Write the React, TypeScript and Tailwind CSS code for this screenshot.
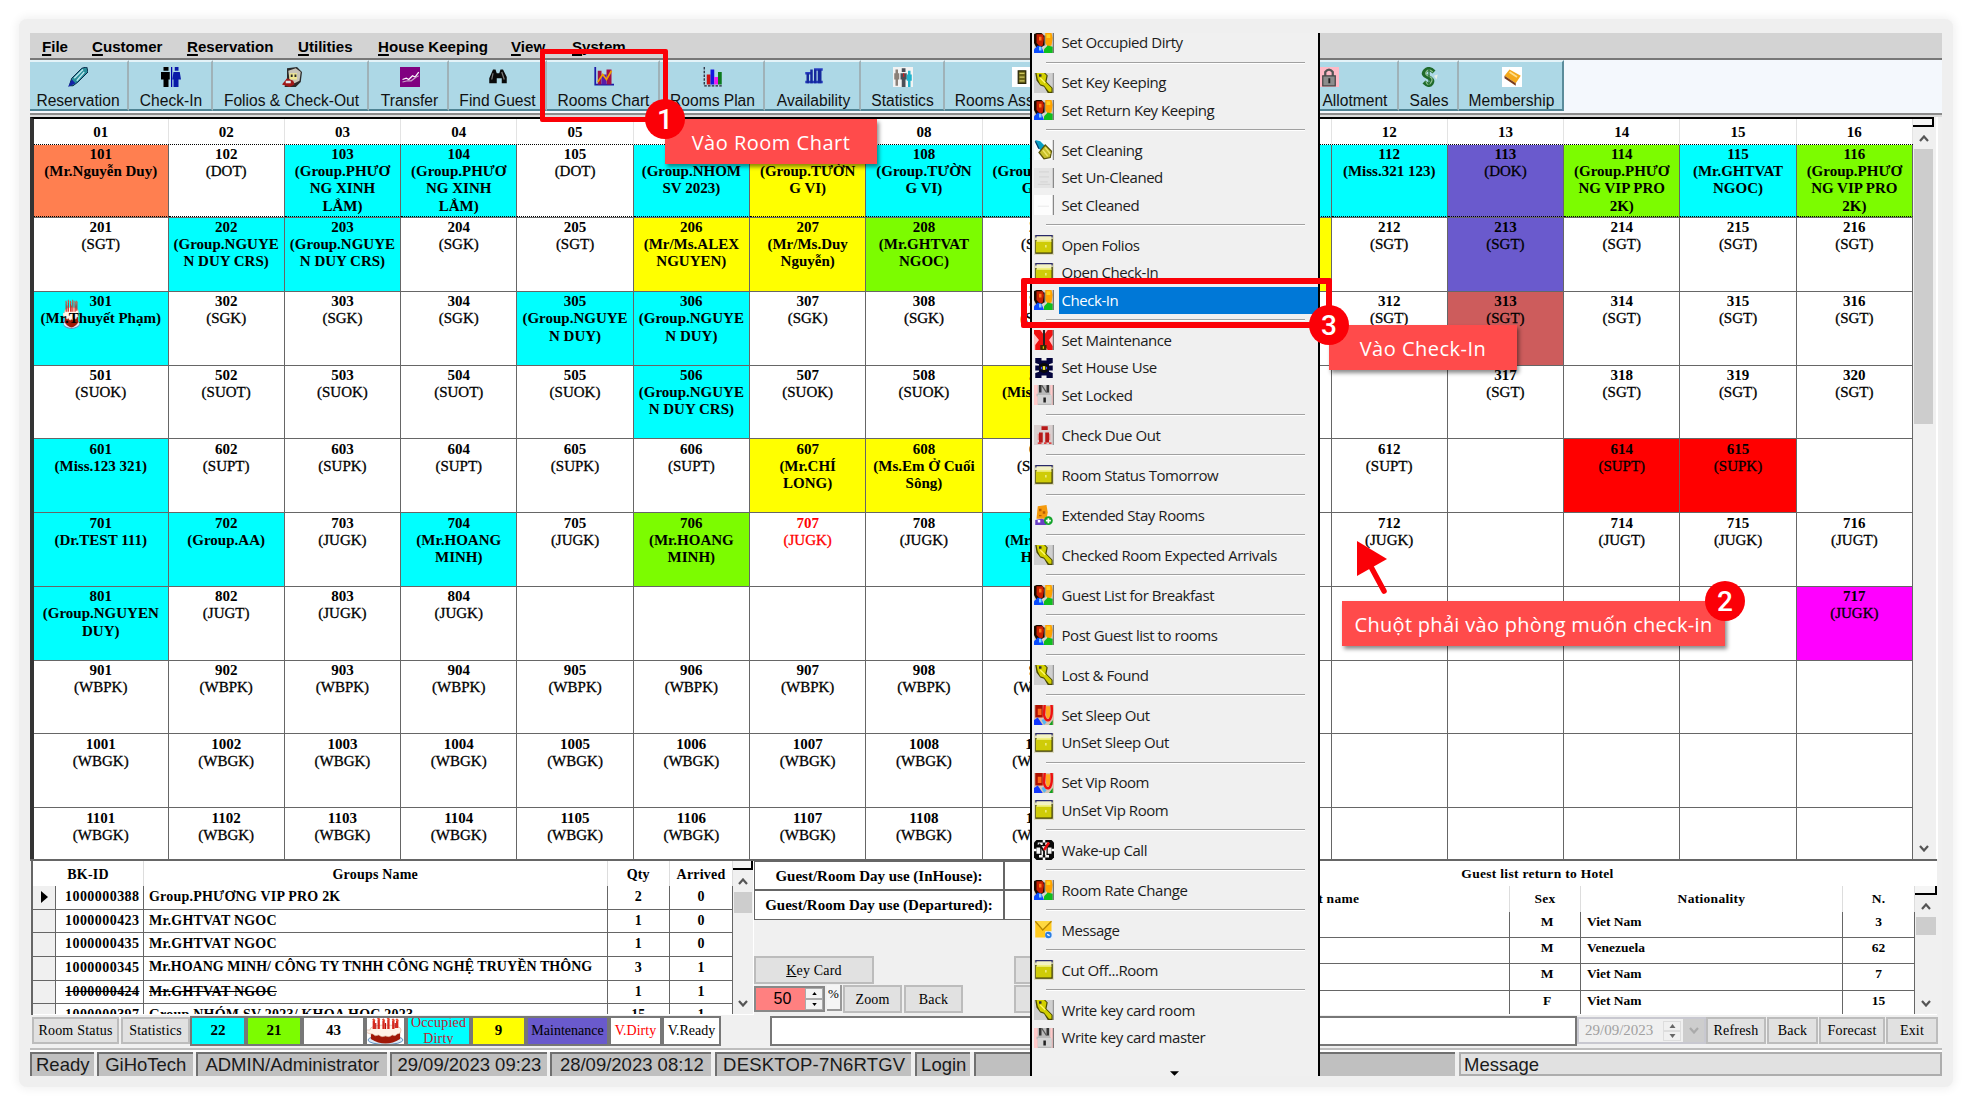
import React from "react";

type Tone = "w" | "c" | "y" | "g" | "o" | "p" | "i" | "r" | "m" | "t";

const toneClass: Record<Tone, string> = {
  w: "bg-white",
  c: "bg-[#00ffff]",
  y: "bg-[#ffff00]",
  g: "bg-[#7cfc00]",
  o: "bg-[#ff7f50]",
  p: "bg-[#6a5acd]",
  i: "bg-[#cd5c5c]",
  r: "bg-[#ff0000]",
  m: "bg-[#ff00ff]",
  t: "bg-white text-[#ff0000]",
};

/* room number | tone | guest name or room type (lines separated by "/n") */
const rooms: string[][] = [
  ["101|o|(Mr.Nguyễn Duy)", "102|w|(DOT)", "103|c|(Group.PHƯƠ/nNG XINH/nLẮM)", "104|c|(Group.PHƯƠ/nNG XINH/nLẮM)", "105|w|(DOT)", "106|c|(Group.NHOM/nSV 2023)", "107|y|(Group.TƯỜN/nG VI)", "108|c|(Group.TƯỜN/nG VI)", "109|c|(Group.TƯỜN/nG VI)", "|c|", "|c|", "112|c|(Miss.321 123)", "113|p|(DOK)", "114|g|(Group.PHƯƠ/nNG VIP PRO/n2K)", "115|c|(Mr.GHTVAT/nNGOC)", "116|g|(Group.PHƯƠ/nNG VIP PRO/n2K)"],
  ["201|w|(SGT)", "202|c|(Group.NGUYE/nN DUY CRS)", "203|c|(Group.NGUYE/nN DUY CRS)", "204|w|(SGK)", "205|w|(SGT)", "206|y|(Mr/Ms.ALEX/nNGUYEN)", "207|y|(Mr/Ms.Duy/nNguyễn)", "208|g|(Mr.GHTVAT/nNGOC)", "209|w|(SGT)", "", "|y|", "212|w|(SGT)", "213|p|(SGT)", "214|w|(SGT)", "215|w|(SGT)", "216|w|(SGT)"],
  ["301|c|(Mr.Thuyết Phạm)", "302|w|(SGK)", "303|w|(SGK)", "304|w|(SGK)", "305|c|(Group.NGUYE/nN DUY)", "306|c|(Group.NGUYE/nN DUY)", "307|w|(SGK)", "308|w|(SGK)", "309|w|(SGK)", "", "", "312|w|(SGT)", "313|i|(SGT)", "314|w|(SGT)", "315|w|(SGT)", "316|w|(SGT)"],
  ["501|w|(SUOK)", "502|w|(SUOT)", "503|w|(SUOK)", "504|w|(SUOT)", "505|w|(SUOK)", "506|c|(Group.NGUYE/nN DUY CRS)", "507|w|(SUOK)", "508|w|(SUOK)", "509|y|(Miss.ANN)", "", "", "", "317|w|(SGT)", "318|w|(SGT)", "319|w|(SGT)", "320|w|(SGT)"],
  ["601|c|(Miss.123 321)", "602|w|(SUPT)", "603|w|(SUPK)", "604|w|(SUPT)", "605|w|(SUPK)", "606|w|(SUPT)", "607|y|(Mr.CHÍ/nLONG)", "608|y|(Ms.Em Ở Cuối/nSông)", "609|w|(SUPT)", "", "", "612|w|(SUPT)", "", "614|r|(SUPT)", "615|r|(SUPK)", ""],
  ["701|c|(Dr.TEST 111)", "702|c|(Group.AA)", "703|w|(JUGK)", "704|c|(Mr.HOANG/nMINH)", "705|w|(JUGK)", "706|g|(Mr.HOANG/nMINH)", "707|t|(JUGK)", "708|w|(JUGK)", "709|c|(Mr.MINH/nHOA)", "", "", "712|w|(JUGK)", "", "714|w|(JUGT)", "715|w|(JUGK)", "716|w|(JUGT)"],
  ["801|c|(Group.NGUYEN/nDUY)", "802|w|(JUGT)", "803|w|(JUGK)", "804|w|(JUGK)", "", "", "", "", "", "", "", "", "", "", "", "717|m|(JUGK)"],
  ["901|w|(WBPK)", "902|w|(WBPK)", "903|w|(WBPK)", "904|w|(WBPK)", "905|w|(WBPK)", "906|w|(WBPK)", "907|w|(WBPK)", "908|w|(WBPK)", "909|w|(WBPK)", "", "", "", "", "", "", ""],
  ["1001|w|(WBGK)", "1002|w|(WBGK)", "1003|w|(WBGK)", "1004|w|(WBGK)", "1005|w|(WBGK)", "1006|w|(WBGK)", "1007|w|(WBGK)", "1008|w|(WBGK)", "1009|w|(WBGK)", "", "", "", "", "", "", ""],
  ["1101|w|(WBGK)", "1102|w|(WBGK)", "1103|w|(WBGK)", "1104|w|(WBGK)", "1105|w|(WBGK)", "1106|w|(WBGK)", "1107|w|(WBGK)", "1108|w|(WBGK)", "1109|w|(WBGK)", "", "", "", "", "", "", ""],
];

/* ---------- icons ---------- */

function Svg({ children, cls = "size-5" }: { children: React.ReactNode; cls?: string }) {
  return (
    <svg viewBox="0 0 16 16" className={`${cls} block shrink-0`} aria-hidden="true">
      {children}
    </svg>
  );
}

function Icon({ name }: { name: string }) {
  switch (name) {
    case "people":
      return (
        <Svg>
          <rect width="16" height="16" fill="#d8d4cc" />
          <path d="M0 1 2 0h4l2 2v8l-3 2H2L0 8z" fill="#1a0a00" />
          <path d="M2 1h5l1 3-1 6-2 1-3-3z" fill="#c81e00" />
          <path d="M4 3h2v3H4z" fill="#ff7a1a" />
          <path d="M9 0h5l1 4-1 6-3 1-2-3z" fill="#ffa200" />
          <path d="M10 1h3v3h-3z" fill="#ffd21e" />
          <path d="M8 2h1v8H8z" fill="#555" />
          <path d="M0 16v-3l3-3 3 1 2 5z" fill="#0a4dff" />
          <path d="M8 16v-3l3-3 4 1v5z" fill="#0fbf1e" />
          <path d="M4 11h2v3H4z" fill="#7fd4ff" />
          <path d="M15 0h1v16h-1z" fill="#777" />
        </Svg>
      );
    case "key":
      return (
        <Svg>
          <rect width="16" height="16" fill="#cfcfcf" />
          <path d="M1 0h8l2 2-1 5 5 5v4h-4l-3-5-3-1-3-4z" fill="#4a4a00" />
          <path d="M2 0h6l2 2-1 5 5 5v3h-2l-4-5-3-1-2-4z" fill="#d2cf00" />
          <path d="M4 1h2v2H4z" fill="#333" />
          <path d="M5 4l4 4" stroke="#fff86a" />
          <path d="M15 0h1v16h-1z" fill="#999" />
        </Svg>
      );
    case "brush":
      return (
        <Svg>
          <rect width="16" height="16" fill="#fafafa" />
          <path d="M1 0l4 1 4 4-3 4-3-3z" fill="#0a9fc4" />
          <path d="M1 1l3 6" stroke="#053a66" />
          <path d="M9 4l5 5-1 5-5 1-4-5z" fill="#c9c12a" stroke="#5c560a" />
          <path d="M7 8l4 5M9 6l4 5" stroke="#efe66a" />
          <path d="M15 0h1v16h-1z" fill="#888" />
        </Svg>
      );
    case "doc":
      return (
        <Svg>
          <rect width="16" height="16" fill="#e4e4e4" />
          <path d="M4 3h8M4 7h8M5 11h6M3 13h10" stroke="#d6d6d6" />
          <path d="M15 0h1v16h-1z" fill="#888" />
        </Svg>
      );
    case "blank":
      return (
        <Svg>
          <rect width="16" height="16" fill="#fdfdfd" />
          <path d="M3 9h9" stroke="#ededed" />
          <path d="M15 0h1v16h-1z" fill="#888" />
        </Svg>
      );
    case "folder":
      return (
        <Svg>
          <rect width="16" height="16" fill="#dedcc0" />
          <path d="M1 0h14v2H1z" fill="#2a2a6a" />
          <path d="M2 1h12v3H2z" fill="#f3f2c4" />
          <path d="M0 4l1 0v11h14V3h-1v1z" fill="#3c3a00" />
          <path d="M1.500 5h12.500v9H1.500z" fill="#cfcc08" />
          <path d="M2 4h12v1.500H2z" fill="#f2f080" />
          <path d="M9 8h1v2H9z" fill="#f7f5a0" />
        </Svg>
      );
    case "wrench":
      return (
        <Svg>
          <rect width="16" height="16" fill="#ffc4c4" />
          <path d="M0 0h5l3 4 3-4h4v4l-3 4 3 5v3h-4l-3-4-3 4H1v-4l3-4-4-5z" fill="#f01010" />
          <path d="M8 0v12" stroke="#222" strokeWidth="1.6" />
          <path d="M5 12h5v4H5z" fill="#3a2a00" />
          <path d="M7 13h1v2H7z" fill="#d2cf00" />
          <path d="M15 0h1v16h-1z" fill="#777" />
        </Svg>
      );
    case "gear":
      return (
        <Svg>
          <path d="M1 0h5v2h4V0h5v4l-3 1v1h3v4h-3v1l3 1v4h-5v-2H6v2H1v-4l3-1v-1H1V6h3V5L1 4z" fill="#04043c" />
          <circle cx="8" cy="8" r="4" fill="#0a0a0a" />
          <path d="M5.500 7h1v2h-1zM9.500 7h1v2h-1z" fill="#3b48ff" />
          <path d="M7 6.500h2v3H7z" fill="#f3ef3a" />
        </Svg>
      );
    case "lock":
      return (
        <Svg>
          <rect width="16" height="16" fill="#ffcaca" />
          <path d="M3 0h10v7l1 2v7H3V9H2V7h1z" fill="#b9b9b9" />
          <path d="M4 0h2v6H4zM10 0h2v6h-2z" fill="#333" />
          <path d="M6 0l4 6" stroke="#555" />
          <path d="M3 8h11v7H3z" fill="#d4d4d4" />
          <path d="M7.500 10h2v4h-2z" fill="#222" />
          <path d="M15 0h1v16h-1z" fill="#777" />
        </Svg>
      );
    case "due":
      return (
        <Svg>
          <rect width="16" height="16" fill="#d9cfcf" />
          <path d="M6 1h5v3H6zM4 6h3v8H4zM9 6h3v8H9z" fill="#b81818" />
          <path d="M3 14h3v1H3zM8 14h2v1H8zM12 14h2v1h-2z" fill="#e01010" />
          <path d="M3 7h1v5H3zM12 7h1v5h-1z" fill="#e58a8a" />
          <path d="M15 0h1v16h-1z" fill="#999" />
        </Svg>
      );
    case "extend":
      return (
        <Svg>
          <path d="M3 1l7-1 1 6-1 5H2z" fill="#f59a0c" />
          <path d="M4 3h2v2H4zM7 5h2v2H7zM4 8h2v1H4z" fill="#b65b00" />
          <path d="M1 12l5-1 4 1v4H1z" fill="#6a3fc4" />
          <path d="M3 12h2v2H3z" fill="#fff" />
          <circle cx="11.500" cy="12.500" r="3.500" fill="#13a32a" />
          <path d="M11.500 10.500v4M9.500 12.500h4" stroke="#fff" strokeWidth="1.400" />
        </Svg>
      );
    case "sleep":
      return (
        <Svg>
          <rect width="16" height="16" fill="#d8c4b4" />
          <path d="M1 0h6v10H1z" fill="#b01000" />
          <path d="M3 3h3v5H3z" fill="#ff6a1a" />
          <path d="M9 1h4v9l-3 1z" fill="#ffa81e" />
          <path d="M0 16v-4l3-2 4 6z" fill="#1237ff" />
          <path d="M6 12l2-1 2 3-2 2z" fill="#59b7f0" />
          <path d="M12 16l3-4v4z" fill="#12a01e" />
          <path d="M8.500 0l-.5 8q1 5 4 4 3-2 2-12" fill="none" stroke="#ee1010" strokeWidth="2" />
        </Svg>
      );
    case "clock":
      return (
        <Svg>
          <path d="M2 0h12l2 2v12l-2 2H2l-2-2V2z" fill="#0a0a0a" />
          <path d="M3 2h4v2H3zM9 2h3v2H9zM2 6h3v5H2zM11 6h3v5h-3zM4 12h3v2H4zM9 12h3v2H9zM6 5h4v7H6z" fill="#f4f4f4" />
          <path d="M7 0h2v2H7zM7 14h2v2H7zM0 7h2v2H0zM14 7h2v2h-2z" fill="#fff" />
          <path d="M4 3l4 6v4" stroke="#111" strokeWidth="1.500" fill="none" />
          <path d="M8 8l4-6" stroke="#e80c0c" strokeWidth="2" />
        </Svg>
      );
    case "mail":
      return (
        <Svg>
          <path d="M1 1h13v13H1z" fill="#ffc91e" />
          <path d="M1 1l6 7 7-7" fill="#ffd840" stroke="#b78600" />
          <path d="M9 9h6v6H9z" fill="#e4efff" />
          <circle cx="11.500" cy="12" r="2.600" fill="#2b7de0" />
          <path d="M10.500 11.500l2 1" stroke="#fff" />
        </Svg>
      );
    /* toolbar */
    case "pen":
      return (
        <Svg>
          <path d="M1 15l2-6 8-8 4-1 1 4-8 8-4 3z" fill="#2a8f9a" stroke="#0a2a4a" strokeWidth="0.800" />
          <path d="M5 9l7-7M7 11l6-7" stroke="#bfeaf0" />
          <path d="M0 16l3-6 3 3z" fill="#1522a8" />
        </Svg>
      );
    case "restroom":
      return (
        <Svg>
          <path d="M2 0h4v3H2zM0 4h7v6H6v6H2v-6H0z" fill="#000" />
          <path d="M8 0h1v16H8z" fill="#00a" />
          <path d="M11 0h3v3h-3zM10 4h5l1 6h-2v6h-4v-6H9z" fill="#0a1aa8" />
        </Svg>
      );
    case "face":
      return (
        <Svg>
          <path d="M4 1l8-1 4 4-1 8-4 4H2l2-5z" fill="#2a2a2a" />
          <path d="M5 3l6-2 4 3-1 7-4 2-4-3z" fill="#c8c4b8" />
          <path d="M6 5h6v5H6z" fill="#f0e890" />
          <path d="M7 6h1.500v2H7zM10 6h1.500v2H10z" fill="#2a2a2a" />
          <path d="M0 14l4-5 5 2 1 3-4 2z" fill="#a01818" />
          <path d="M3 11h4v2H3z" fill="#dfe7ee" />
        </Svg>
      );
    case "transfer":
      return (
        <Svg>
          <rect width="16" height="16" fill="#800080" />
          <path d="M2 10l3-1 2 1 3-3 2 1 3-4" stroke="#fff" strokeWidth="1" fill="none" />
          <path d="M2 12l4-1 3 0 4-3 2-1" stroke="#c9a0c9" strokeWidth="1" fill="none" />
        </Svg>
      );
    case "binoc":
      return (
        <Svg cls="h-5 w-[20px]">
          <path d="M4 2h2l1 3h2l1-3h2l3 6v5h-4V9H7v4H1V9z" fill="#0a0a0a" />
          <path d="M4 5l-1 5M11 4l2 6" stroke="#7a7a7a" />
        </Svg>
      );
    case "chart":
      return (
        <Svg>
          <path d="M1 0v14h15" stroke="#1a1aa8" strokeWidth="1.400" fill="none" />
          <path d="M3 3h3v11H3zM10 2h4v12h-4z" fill="#a01048" />
          <path d="M6 6h4v8H6z" fill="#5a1aa8" />
          <path d="M3 12l4-6 3 4 4-7" stroke="#f0a000" strokeWidth="1.300" fill="none" />
        </Svg>
      );
    case "plan":
      return (
        <Svg>
          <path d="M1 0v15h15" stroke="#223" strokeWidth="1" strokeDasharray="2 1" fill="none" />
          <path d="M3 6h3v8H3z" fill="#d01010" />
          <path d="M6 2h3v12H6z" fill="#1414e0" />
          <path d="M9 8h3v6H9z" fill="#f018f0" />
          <path d="M12 4h3v10h-3z" fill="#0b7a1c" />
        </Svg>
      );
    case "avail":
      return (
        <Svg>
          <path d="M8 1h7v2H8zM1 11h14v2H1zM1 4h5v2H1z" fill="#2a3fc4" />
          <path d="M2 5h2v8H2zM5 2h2v11H5zM8 2h2v11H8zM11 2h3v11h-3z" fill="#14289c" />
        </Svg>
      );
    case "stats":
      return (
        <Svg>
          <rect width="16" height="16" fill="#f3f3f3" />
          <path d="M2 2h2v3H2zM1 5h4v5H4v5H2v-5H1z" fill="#8a8078" />
          <path d="M7 1h3v3H7zM6 5h5v5h-1v6H7v-6H6z" fill="#4a4f58" />
          <path d="M12 3h2v3h-2zM11 6h4v5h-1v5h-2v-5h-1z" fill="#1fb3cc" />
          <path d="M8 5h1v3H8z" fill="#d02020" />
        </Svg>
      );
    case "assign":
      return (
        <Svg>
          <rect width="16" height="16" fill="#fff" />
          <path d="M5 3h6v10H5z" fill="#6b6518" stroke="#2b2808" />
          <path d="M6 5h4M6 8h4M6 11h4" stroke="#cfc860" />
        </Svg>
      );
    case "padlock":
      return (
        <Svg>
          <rect width="16" height="16" fill="#ffb9c6" />
          <path d="M5 8V4q3-4 6 0v4" stroke="#555" strokeWidth="1.800" fill="none" />
          <path d="M3 7h10v8H3z" fill="#8c8c8c" stroke="#444" />
          <path d="M7.500 9h1.500v4H7.500z" fill="#222" />
        </Svg>
      );
    case "dollar":
      return (
        <Svg>
          <path d="M12 4Q8 0 5 3t2 5 3 5-6-1" stroke="#1f6a2a" strokeWidth="3.400" fill="none" />
          <path d="M11 4Q8 1 6 3.500t2 4 1.500 5-4-1" stroke="#8fc08f" strokeWidth="1" fill="none" />
          <path d="M8 0v16" stroke="#1f6a2a" strokeWidth="1" />
          <path d="M12 7l3-1-1 4z" fill="#e6efe6" />
        </Svg>
      );
    case "card":
      return (
        <Svg>
          <rect width="16" height="16" fill="#fff" />
          <path d="M2 7l4-5 9 5-4 6z" fill="#f4a91c" />
          <path d="M2 7l9 6v2L2 9z" fill="#7a3c1c" />
          <path d="M6 4l6 4" stroke="#ffe08a" strokeWidth="1.500" />
        </Svg>
      );
    default:
      return null;
  }
}

function Cake({ cls }: { cls: string }) {
  return (
    <svg viewBox="0 0 38 28" preserveAspectRatio="none" className={`${cls} block shrink-0`} aria-hidden="true">
      <ellipse cx="19" cy="23" rx="18" ry="4.500" fill="#dbe8f4" stroke="#5f8fc0" />
      <path d="M4 14v8q15 9 30 0v-8z" fill="#a01808" />
      <path d="M3 13q0-5 16-5t16 5q0 4-4 4-2 3-5 1-3 3-7 1-4 2-7-1-4 2-6-1-7 0-7-4z" fill="#fff3e8" stroke="#d8a890" strokeWidth="0.600" />
      <path d="M7 4v8M12 3v9M17 4v8M22 3v9M27 4v8M31 4v7" stroke="#d8281c" strokeWidth="2.400" />
      <path d="M6 2l2 2M11 1l2 2M16 2l2 2M21 1l2 2M26 2l2 2M30 2l2 2" stroke="#e8442c" strokeWidth="2.200" />
      <path d="M9 6v6M19 6v6M29 6v5" stroke="#b01010" strokeWidth="1.200" />
    </svg>
  );
}

/* ---------- shared pieces ---------- */

function Chevron({ down = false, cls = "text-[#555]" }: { down?: boolean; cls?: string }) {
  return (
    <svg viewBox="0 0 10 7" className={`h-[7px] w-[10px] ${cls}`} fill="none" stroke="currentColor" strokeWidth="2.200">
      <path d={down ? "M1 1l4 4.500L9 1" : "M1 6l4-4.500L9 6"} />
    </svg>
  );
}

function ScrollBar({ thumb, corner }: { thumb: string; corner: string }) {
  return (
    <div className="flex h-full w-full flex-col bg-[#f0f0f0]">
      <div className={`${corner} shrink-0 border-r-2 border-b-2 border-black bg-[#f5f5f5]`} />
      <div className="flex h-[22px] shrink-0 items-center justify-center">
        <Chevron />
      </div>
      <div className={`${thumb} mx-px shrink-0 bg-[#cdcdcd]`} />
      <div className="flex-1" />
      <div className="flex h-[21px] shrink-0 items-center justify-center">
        <Chevron down />
      </div>
    </div>
  );
}

function Button({ children, cls = "" }: { children?: React.ReactNode; cls?: string }) {
  return (
    <div className={`flex shrink-0 items-center justify-center border-2 border-[#bcbcbc] bg-[#e1e1e1] text-[14px] tracking-[0.2px] whitespace-nowrap ${cls}`}>
      {children}
    </div>
  );
}

function RoomCell({ data, row }: { data: string; row: number }) {
  const [num, tone, rest] = data ? data.split("|") : ["", "w", ""];
  const isType = /^\([A-Z]{3,4}\)$/.test(rest);
  const edge =
    row === 0
      ? "border-b border-b-black [border-bottom-style:dotted] pt-px"
      : row === 1
        ? "border-t border-b-[1.5px] pt-px"
        : "border-b-[1.5px] pt-[1.5px]";
  return (
    <div className={`relative overflow-hidden border-r-[1.5px] border-[#666] text-center ${edge} ${toneClass[tone as Tone]}`}>
      {num === "301" && <Cake cls="absolute top-[7px] left-[29px] h-[30px] w-[17px]" />}
      <div className="relative font-bold whitespace-nowrap">{num}</div>
      {rest.split("/n").map((line, i) => (
        <div
          key={i}
          className={`relative flex justify-center whitespace-nowrap ${isType ? "[-webkit-text-stroke:0.3px_currentColor]" : "font-bold"}`}
        >
          {line}
        </div>
      ))}
    </div>
  );
}

const menus: [string, string][] = [
  ["File", "w-[50px]"],
  ["Customer", "w-[95px]"],
  ["Reservation", "w-[111px]"],
  ["Utilities", "w-[80px]"],
  ["House Keeping", "w-[133px]"],
  ["View", "w-[61px]"],
  ["System", "w-[80px]"],
];

const tools: [string, string, string][] = [
  ["Reservation", "pen", "w-[99px] pr-px"],
  ["Check-In", "restroom", "w-[84px] pl-[2px]"],
  ["Folios & Check-Out", "face", "w-[156px] pl-[3px]"],
  ["Transfer", "transfer", "w-[80px] pl-[3px]"],
  ["Find Guest", "binoc", "w-[98px] pl-px"],
  ["Rooms Chart", "chart", "w-[113px] pl-[2px]"],
  ["Rooms Plan", "plan", "w-[105px] pl-[2px]"],
  ["Availability", "avail", "w-[96px] pl-[3px]"],
  ["Statistics", "stats", "w-[84px] pl-px"],
  ["Rooms Assignment", "assign", "w-[155px] pl-px"],
  ["", "", "w-[160px]"],
  ["Rooms Allotment", "padlock", "w-[139px]"],
  ["Sales", "dollar", "w-[60px] pl-[2px]"],
  ["Membership", "card", "w-[105px] pl-[2px] border-r-[#5b8c9b]"],
];

const menuItems: ([string, string] | null)[] = [
  ["Set Occupied Dirty", "people"], null,
  ["Set Key Keeping", "key"], ["Set Return Key Keeping", "people"], null,
  ["Set Cleaning", "brush"], ["Set Un-Cleaned", "doc"], ["Set Cleaned", "blank"], null,
  ["Open Folios", "folder"], ["Open Check-In", "folder"], ["Check-In", "people"], null,
  ["Set Maintenance", "wrench"], ["Set House Use", "gear"], ["Set Locked", "lock"], null,
  ["Check Due Out", "due"], null,
  ["Room Status Tomorrow", "folder"], null,
  ["Extended Stay Rooms", "extend"], null,
  ["Checked Room Expected Arrivals", "key"], null,
  ["Guest List for Breakfast", "people"], null,
  ["Post Guest list to rooms", "people"], null,
  ["Lost & Found", "key"], null,
  ["Set Sleep Out", "sleep"], ["UnSet Sleep Out", "folder"], null,
  ["Set Vip Room", "sleep"], ["UnSet Vip Room", "folder"], null,
  ["Wake-up Call", "clock"], null,
  ["Room Rate Change", "people"], null,
  ["Message", "mail"], null,
  ["Cut Off...Room", "folder"], null,
  ["Write key card room", "key"], ["Write key card master", "lock"],
];

function ContextMenu() {
  return (
    <div className="absolute top-0 left-[1000px] h-[1043px] w-[290px] overflow-hidden border-x-2 border-black bg-[#f0f0f0] font-['Open_Sans',sans-serif] text-[15px] tracking-[-0.45px] text-[#1c1c1c]">
      <div className="-mt-[4px] flex flex-col">
        {menuItems.map((it, i) =>
          it ? (
            <div key={i} className="flex h-[27.500px] shrink-0 items-center">
              <div className="flex w-[27px] shrink-0 justify-start pl-[2px]">
                <Icon name={it[1]} />
              </div>
              <div
                className={`flex h-full flex-1 items-center pb-px pl-[2.500px] whitespace-nowrap ${it[0] === "Check-In" ? "bg-[#0078d7] text-white" : ""}`}
              >
                {it[0]}
              </div>
            </div>
          ) : (
            <div key={i} className="flex h-[12.500px] shrink-0 items-center">
              <div className="ml-[14px] h-[2px] w-[259px] border-t border-b border-t-[#a0a0a0] border-b-white" />
            </div>
          ),
        )}
      </div>
      <svg viewBox="0 0 10 5" className="absolute bottom-0 left-[138px] h-[5px] w-[9px]">
        <path d="M0 0h10L5 5z" fill="#000" />
      </svg>
    </div>
  );
}

const groups: [string, string, string, string, boolean?][] = [
  ["1000000388", "Group.PHƯƠNG VIP PRO 2K", "2", "0"],
  ["1000000423", "Mr.GHTVAT NGOC", "1", "0"],
  ["1000000435", "Mr.GHTVAT NGOC", "1", "0"],
  ["1000000345", "Mr.HOANG MINH/ CÔNG TY TNHH CÔNG NGHỆ TRUYỀN THÔNG", "3", "1"],
  ["1000000424", "Mr.GHTVAT NGOC", "1", "1", true],
  ["1000000397", "Group.NHÓM SV 2023/ KHOA HOC 2023", "15", "1"],
];

function GroupsTable() {
  return (
    <div className="flex w-[723px] shrink-0 border-l-2 border-[#666] bg-white">
      <div className="flex h-[153px] w-[700px] shrink-0 flex-col overflow-hidden text-[14px] font-bold">
        <div className="grid h-[25px] shrink-0 grid-cols-[111px_463.500px_62.500px_1fr] items-center text-center tracking-[0.2px] [&>div]:flex [&>div]:h-full [&>div]:items-center [&>div]:justify-center [&>div]:border-r [&>div]:border-[#ddd] [&>div]:pt-[2px]">
          <div>BK-ID</div>
          <div>Groups Name</div>
          <div>Qty</div>
          <div>Arrived</div>
        </div>
        {groups.map((g, i) => (
          <div
            key={i}
            className="grid h-[23.700px] shrink-0 grid-cols-[23px_88px_463.500px_62.500px_1fr] border-b-[1.500px] border-[#666] leading-[22px] [&>div]:border-r-[1.500px] [&>div]:border-[#666]"
          >
            <div className="flex items-center justify-center bg-[#f0f0f0]">
              {i === 0 && (
                <svg viewBox="0 0 7 12" className="h-3 w-[7px]">
                  <path d="M0 0l7 6-7 6z" />
                </svg>
              )}
            </div>
            <div className={`pl-[9px] text-[14px] tracking-[0.45px] ${g[4] ? "line-through" : ""}`}>{g[0]}</div>
            <div className={`pl-[5px] whitespace-nowrap ${g[4] ? "line-through" : ""} ${i === 3 ? "leading-[20px] tracking-[0.030px]" : "tracking-[0.220px]"}`}>{g[1]}</div>
            <div className="text-center">{g[2]}</div>
            <div className="text-center">{g[3]}</div>
          </div>
        ))}
      </div>
      <div className="h-[153px] w-[20px]">
        <ScrollBar corner="h-[9px]" thumb="h-[21px]" />
      </div>
    </div>
  );
}

const guests: [string, string, string][] = [
  ["M", "Viet Nam", "3"],
  ["M", "Venezuela", "62"],
  ["M", "Viet Nam", "7"],
  ["F", "Viet Nam", "15"],
];

function GuestTable() {
  return (
    <div className="flex w-[799px] shrink-0 flex-col bg-white text-[13.500px] font-bold">
      <div className="flex h-[25px] shrink-0 items-center justify-center pt-[2px] tracking-[0.300px]">Guest list return to Hotel</div>
      <div className="flex h-[128px]">
        <div className="flex w-[777px] shrink-0 flex-col overflow-hidden">
          <div className="grid h-[26px] shrink-0 grid-cols-[372px_71px_262px_1fr] text-center tracking-[0.300px] [&>div]:flex [&>div]:items-center [&>div]:justify-center [&>div]:border-r [&>div]:border-[#ddd]">
            <div>Guest name</div>
            <div>Sex</div>
            <div>Nationality</div>
            <div>N.</div>
          </div>
          {guests.map((g, i) => (
            <div
              key={i}
              className="grid h-[26.200px] shrink-0 grid-cols-[372px_71px_262px_1fr] border-b-[1.500px] border-[#666] leading-[20px] [&>div]:border-r-[1.500px] [&>div]:border-[#666]"
            >
              <div />
              <div className="pl-1 text-center">{g[0]}</div>
              <div className="pl-[6px]">{g[1]}</div>
              <div className="text-center">{g[2]}</div>
            </div>
          ))}
        </div>
        <div className="w-[22px]">
          <ScrollBar corner="h-[9px]" thumb="h-[18px]" />
        </div>
      </div>
    </div>
  );
}

function MiddlePanel() {
  return (
    <div className="w-[384px] shrink-0 overflow-hidden bg-[#f0f0f0]">
      <div className="grid w-[384px] grid-cols-[250px_1fr] grid-rows-[29px_30px] text-[15px] font-bold [&>div]:flex [&>div]:items-center [&>div]:justify-center [&>div]:border-[1.500px] [&>div]:border-[#666] [&>div]:bg-white [&>div]:pt-px">
        <div>Guest/Room Day use (InHouse):</div>
        <div />
        <div>Guest/Room Day use (Departured):</div>
        <div />
      </div>
      <div className="mt-[36px] flex justify-between">
        <Button cls="h-[28px] w-[120px]">
          <span><span className="underline">K</span>ey Card</span>
        </Button>
        <Button cls="h-[28px] w-[124px]" />
      </div>
      <div className="mt-px flex">
        <div className="mt-px flex h-[26px] w-[71px] shrink-0 border-2 border-[#888] bg-[#f0f0f0] font-['Liberation_Sans',Arial,sans-serif]">
          <div className="flex w-[49px] items-center justify-center bg-[#ff8080] pl-1 text-[16px]">50</div>
          <div className="flex flex-1 flex-col">
            {["M0 4l3-4 3 4z", "M0 0l3 4 3-4z"].map((d) => (
              <div key={d} className="flex flex-1 items-center justify-center border border-[#aaa] bg-[#f3f3f3]">
                <svg viewBox="0 0 6 4" className="h-[3px] w-[5px]"><path d={d} /></svg>
              </div>
            ))}
          </div>
        </div>
        <div className="ml-[2px] flex h-[26px] w-[15px] shrink-0 justify-center border-r-2 border-b-2 border-[#999] bg-[#f5f5f5] text-[13px] leading-[17px]">%</div>
        <Button cls="ml-px h-[28px] w-[59px]">Zoom</Button>
        <Button cls="ml-[2px] h-[28px] w-[59px]">Back</Button>
        <div className="flex-1" />
        <Button cls="h-[28px] w-[124px]" />
      </div>
    </div>
  );
}

function StatusChip({ children, cls }: { children: React.ReactNode; cls: string }) {
  return (
    <div className={`flex h-[30px] shrink-0 items-center justify-center overflow-hidden border-2 border-[#777] text-center whitespace-nowrap ${cls}`}>
      {children}
    </div>
  );
}

function ActionBar() {
  return (
    <div className="flex h-[31px] shrink-0 items-center pl-[2px] text-[14px]">
      <Button cls="h-[27px] w-[87px]">Room Status</Button>
      <Button cls="ml-[2px] h-[27px] w-[69px]">Statistics</Button>
      <StatusChip cls="w-[56px] bg-[#00ffff] text-[15px] font-bold">22</StatusChip>
      <StatusChip cls="w-[56px] bg-[#7cfc00] text-[15px] font-bold">21</StatusChip>
      <StatusChip cls="w-[63px] bg-white text-[15px] font-bold">43</StatusChip>
      <StatusChip cls="w-[41px] bg-white">
        <Cake cls="h-[28px] w-[37px]" />
      </StatusChip>
      <StatusChip cls="w-[65px] bg-[#00ffff] text-[#c02030]">
        <span className="leading-[16px] tracking-[0.200px]">Occupied<br />Dirty</span>
      </StatusChip>
      <StatusChip cls="w-[55px] bg-[#ffff00] text-[15px] font-bold">9</StatusChip>
      <StatusChip cls="w-[83px] bg-[#6a5acd]">Maintenance</StatusChip>
      <StatusChip cls="w-[53px] bg-white text-[#ff0000]">V.Dirty</StatusChip>
      <StatusChip cls="w-[59px] bg-white">V.Ready</StatusChip>
      <div className="ml-[49px] h-[30px] w-[807px] shrink-0 border-2 border-[#777] bg-white" />
      <div className="flex h-[27px] w-[129px] shrink-0 items-center border-2 border-[#c8c8d0] pl-[6px] text-[15px] text-[#a0a0a0]">
        29/09/2023
        <div className="ml-auto flex h-[20px] w-[18px] flex-col">
          {["M0 4l3-4 3 4z", "M0 0l3 4 3-4z"].map((d) => (
            <div key={d} className="flex flex-1 items-center justify-center border border-[#ddd]">
              <svg viewBox="0 0 6 4" className="h-[4px] w-[7px]" fill="#666"><path d={d} /></svg>
            </div>
          ))}
        </div>
        <div className="ml-[2px] flex h-[23px] w-[21px] items-center justify-center bg-[#cdcdcd]">
          <Chevron down cls="text-[#aaa]" />
        </div>
      </div>
      <Button cls="h-[27px] w-[60px]">Refresh</Button>
      <Button cls="ml-px h-[27px] w-[51px]">Back</Button>
      <Button cls="ml-px h-[27px] w-[66px]">Forecast</Button>
      <Button cls="ml-px h-[27px] w-[52px]">Exit</Button>
    </div>
  );
}

const statusPanels: [string, string][] = [
  ["Ready", "w-[63.5px]"],
  ["GiHoTech", "w-[95.5px]"],
  ["ADMIN/Administrator", "w-[190.5px]"],
  ["29/09/2023 09:23", "w-[156.8px]"],
  ["28/09/2023 08:12", "w-[161.2px]"],
  ["DESKTOP-7N6RTGV", "w-[196.5px] tracking-[0.2px]"],
  ["Login", "w-[55.5px]"],
  ["", "w-[481.5px]"],
];

function Callout({ text, cls }: { text: string; cls: string }) {
  return (
    <div className={`absolute flex h-[45px] items-center justify-center bg-[#ff4b4b] pt-[3px] font-['Open_Sans',sans-serif] text-[20px] whitespace-nowrap text-white shadow-[2px_3px_4px_rgba(0,0,0,0.45)] ${cls}`}>
      {text}
    </div>
  );
}

function Step({ n, cls }: { n: string; cls: string }) {
  return (
    <div className={`absolute flex size-10 items-center justify-center rounded-full bg-[#fb0007] pt-[2px] font-['Roboto',sans-serif] text-[28px] leading-none font-medium text-white ${cls}`}>
      {n}
    </div>
  );
}

export default function App() {
  return (
    <div className="h-[1108px] w-[1972px] overflow-hidden bg-white p-[19px] pb-[21px] font-['Liberation_Serif','Times_New_Roman',serif] text-black">
      <div className="h-full rounded-lg bg-[#efefef] px-[11px] pt-[14px] shadow-[0_0_10px_2px_#f0f0f0]">
        <div className="relative h-[1043px] w-[1912px]">
          <div className="flex h-full flex-col overflow-hidden bg-[#f0f0f0]">
            {/* menu bar */}
            <div className="flex h-[27px] shrink-0 items-center border-b-2 border-[#777] bg-[#d3d3d3] pt-[3px] pl-3 font-['Liberation_Sans',Arial,sans-serif] text-[15.100px] leading-[20px] font-bold">
              {menus.map(([m, w]) => (
                <div key={m} className={`${w} shrink-0 whitespace-nowrap`}>
                  <span className="underline decoration-[1.500px] underline-offset-2">{m[0]}</span>
                  {m.slice(1)}
                </div>
              ))}
            </div>

            {/* tool bar */}
            <div className="flex h-[53px] shrink-0 bg-[#f4f8fd] pb-[2px] font-['Liberation_Sans',Arial,sans-serif] text-[15.600px] text-[#111]">
              {tools.map(([label, icon, w]) => (
                <div
                  key={label}
                  className={`${w} flex shrink-0 flex-col items-center border-t-2 border-r-2 border-b-2 border-[#9fb2b8] border-t-[#e4f3f8] border-b-[#4f8393] bg-[#add8e6] pt-[5px] whitespace-nowrap`}
                >
                  <Icon name={icon} />
                  <span className="mt-[3px] leading-[22px]">{label}</span>
                </div>
              ))}
            </div>
            <div className="h-[2px] shrink-0 bg-[#8c8c8c]" />
            <div className="h-[2px] shrink-0 bg-[#dcdcdc]" />

            {/* room grid */}
            <div className="flex h-[742px] shrink-0">
              <div className="w-[1883px] shrink-0 overflow-hidden border-t-2 border-l-4 border-black border-l-[#333] bg-white text-[15px] leading-[17.200px]">
                <div className="grid h-[26px] grid-cols-[134.5px_repeat(15,minmax(0,1fr))] border-b border-dotted border-black">
                  {Array.from({ length: 16 }, (_, i) => (
                    <div key={i} className="flex items-center justify-center border-r border-[#e3e3e3] pt-[2px] font-bold">
                      {String(i + 1).padStart(2, "0")}
                    </div>
                  ))}
                </div>
                <div className="grid grid-cols-[134.5px_repeat(15,minmax(0,1fr))] grid-rows-[72px_74.750px_repeat(8,73.750px)]">
                  {rooms.flatMap((r, ri) => r.map((c, ci) => <RoomCell key={`${ri}-${ci}`} data={c} row={ri} />))}
                </div>
              </div>
              <div className="w-[21px] shrink-0 border-t-2 border-black">
                <ScrollBar corner="h-[8px]" thumb="h-[275px]" />
              </div>
              <div className="ml-[2px] w-[2px] bg-white" />
            </div>
            <div className="h-[2px] w-[1907px] shrink-0 bg-[#666]" />

            {/* lower panels */}
            <div className="flex h-[154px] shrink-0 pl-px">
              <GroupsTable />
              <MiddlePanel />
              <GuestTable />
            </div>
            <ActionBar />
            <div className="mt-[2px] h-[2px] shrink-0 bg-[#bdbdbd]" />
            <div className="h-[2px] shrink-0 bg-white" />

            {/* status bar */}
            <div className="flex h-[24px] shrink-0 gap-[3.500px] bg-[#f0f0f0] font-['Liberation_Sans',Arial,sans-serif] text-[18.500px] leading-[22px] text-[#1a1a1a]">
              {statusPanels.map(([t, w]) => (
                <div key={t} className={`${w} flex shrink-0 items-center justify-center border-t-2 border-l-2 border-[#707070] bg-[#c0c0c0] whitespace-nowrap`}>
                  {t}
                </div>
              ))}
              <div className="flex flex-1 items-center border-2 border-[#adadad] bg-[#e1e1e1] pt-px pl-[3px]">Message</div>
            </div>
          </div>

          <ContextMenu />

          {/* guide annotations */}
          <div className="absolute top-[16px] left-[510px] h-[73px] w-[128px] rounded-[2px] border-[5px] border-[#fb0007]" />
          <Callout text="Vào Room Chart" cls="top-[86px] left-[635px] w-[212px] tracking-[0.5px]" />
          <Step n="1" cls="top-[66px] left-[615px]" />
          <div className="absolute top-[245px] left-[991px] h-[50px] w-[311px] rounded-[2px] border-[6px] border-[#fb0007]" />
          <Callout text="Vào Check-In" cls="top-[292px] left-[1299px] w-[188px] tracking-[0.5px]" />
          <Step n="3" cls="top-[272px] left-[1279px]" />
          <Callout text="Chuột phải vào phòng muốn check-in" cls="top-[568px] left-[1312px] w-[383px] tracking-[0.3px]" />
          <Step n="2" cls="top-[548px] left-[1675px]" />
          <svg viewBox="0 0 34 54" className="absolute top-[508px] left-[1326px] h-[54px] w-[34px]">
            <path d="M14 24l14 26" stroke="#fb0007" strokeWidth="5.500" strokeLinecap="round" />
            <path d="M1 0l30 18-30 17z" fill="#fb0007" />
          </svg>
        </div>
      </div>
    </div>
  );
}
